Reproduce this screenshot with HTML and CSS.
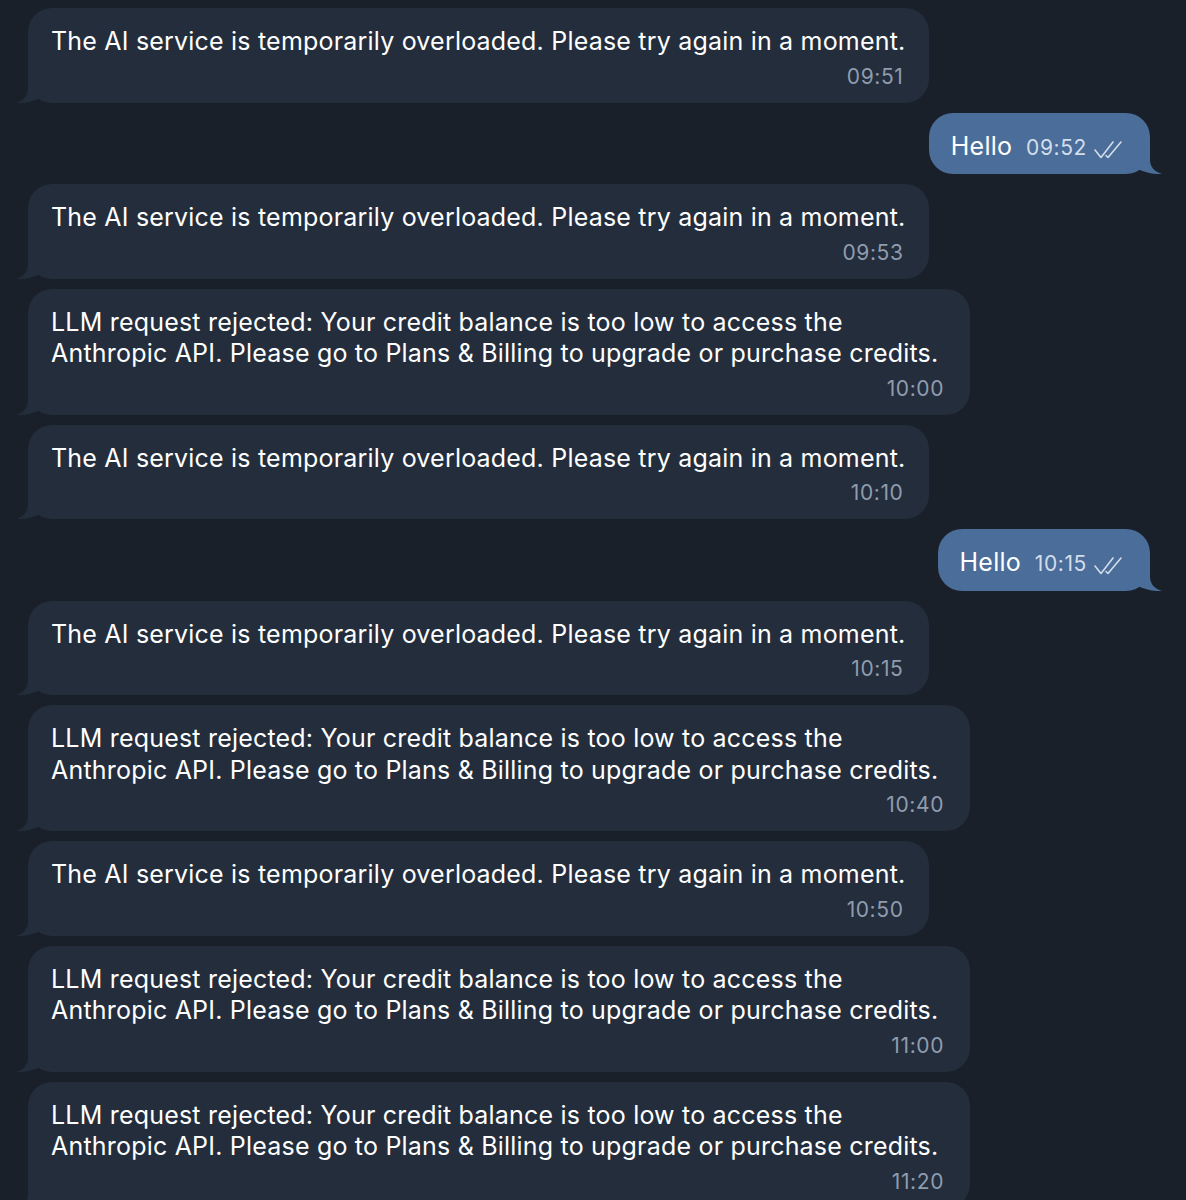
FILE: index.html
```html
<!DOCTYPE html>
<html lang="en">
<head>
<meta charset="utf-8">
<title>Chat</title>
<link rel="stylesheet" href="styles.css">
</head>
<body>
<div class="chat">
  <div class="msg in">
    <div class="bubble">
      <svg class="tail" viewBox="0 0 40 34" width="40" height="34"><path d="M12,0 L12,20 C12,27 7,32 0,34 C9,34.5 17,32.5 25,28.5 L40,28.5 L40,0 Z"/></svg>
      <p class="text">The AI service is temporarily overloaded. Please try again in a moment.</p>
      <div class="time">09:51</div>
    </div>
  </div>
  <div class="msg out">
    <div class="bubble">
      <svg class="tail" viewBox="0 0 40 34" width="40" height="34"><path d="M28,0 L28,20 C28,27 33,32 40,34 C31,34.5 23,32.5 15,28.5 L0,28.5 L0,0 Z"/></svg>
      <span class="text">Hello</span>
      <span class="meta"><span class="time">09:52</span><svg class="checks" viewBox="0 0 30 20" width="30" height="20"><path d="M1,10 L7,17.5 L19,2"/><path d="M12,15.5 L14,17.5 L27,2"/></svg></span>
    </div>
  </div>
  <div class="msg in">
    <div class="bubble">
      <svg class="tail" viewBox="0 0 40 34" width="40" height="34"><path d="M12,0 L12,20 C12,27 7,32 0,34 C9,34.5 17,32.5 25,28.5 L40,28.5 L40,0 Z"/></svg>
      <p class="text">The AI service is temporarily overloaded. Please try again in a moment.</p>
      <div class="time">09:53</div>
    </div>
  </div>
  <div class="msg in">
    <div class="bubble">
      <svg class="tail" viewBox="0 0 40 34" width="40" height="34"><path d="M12,0 L12,20 C12,27 7,32 0,34 C9,34.5 17,32.5 25,28.5 L40,28.5 L40,0 Z"/></svg>
      <p class="text">LLM request rejected: Your credit balance is too low to access the Anthropic API. Please go to Plans &amp; Billing to upgrade or purchase credits.</p>
      <div class="time">10:00</div>
    </div>
  </div>
  <div class="msg in">
    <div class="bubble">
      <svg class="tail" viewBox="0 0 40 34" width="40" height="34"><path d="M12,0 L12,20 C12,27 7,32 0,34 C9,34.5 17,32.5 25,28.5 L40,28.5 L40,0 Z"/></svg>
      <p class="text">The AI service is temporarily overloaded. Please try again in a moment.</p>
      <div class="time">10:10</div>
    </div>
  </div>
  <div class="msg out">
    <div class="bubble">
      <svg class="tail" viewBox="0 0 40 34" width="40" height="34"><path d="M28,0 L28,20 C28,27 33,32 40,34 C31,34.5 23,32.5 15,28.5 L0,28.5 L0,0 Z"/></svg>
      <span class="text">Hello</span>
      <span class="meta"><span class="time">10:15</span><svg class="checks" viewBox="0 0 30 20" width="30" height="20"><path d="M1,10 L7,17.5 L19,2"/><path d="M12,15.5 L14,17.5 L27,2"/></svg></span>
    </div>
  </div>
  <div class="msg in">
    <div class="bubble">
      <svg class="tail" viewBox="0 0 40 34" width="40" height="34"><path d="M12,0 L12,20 C12,27 7,32 0,34 C9,34.5 17,32.5 25,28.5 L40,28.5 L40,0 Z"/></svg>
      <p class="text">The AI service is temporarily overloaded. Please try again in a moment.</p>
      <div class="time">10:15</div>
    </div>
  </div>
  <div class="msg in">
    <div class="bubble">
      <svg class="tail" viewBox="0 0 40 34" width="40" height="34"><path d="M12,0 L12,20 C12,27 7,32 0,34 C9,34.5 17,32.5 25,28.5 L40,28.5 L40,0 Z"/></svg>
      <p class="text">LLM request rejected: Your credit balance is too low to access the Anthropic API. Please go to Plans &amp; Billing to upgrade or purchase credits.</p>
      <div class="time">10:40</div>
    </div>
  </div>
  <div class="msg in">
    <div class="bubble">
      <svg class="tail" viewBox="0 0 40 34" width="40" height="34"><path d="M12,0 L12,20 C12,27 7,32 0,34 C9,34.5 17,32.5 25,28.5 L40,28.5 L40,0 Z"/></svg>
      <p class="text">The AI service is temporarily overloaded. Please try again in a moment.</p>
      <div class="time">10:50</div>
    </div>
  </div>
  <div class="msg in">
    <div class="bubble">
      <svg class="tail" viewBox="0 0 40 34" width="40" height="34"><path d="M12,0 L12,20 C12,27 7,32 0,34 C9,34.5 17,32.5 25,28.5 L40,28.5 L40,0 Z"/></svg>
      <p class="text">LLM request rejected: Your credit balance is too low to access the Anthropic API. Please go to Plans &amp; Billing to upgrade or purchase credits.</p>
      <div class="time">11:00</div>
    </div>
  </div>
  <div class="msg in">
    <div class="bubble">
      <svg class="tail" viewBox="0 0 40 34" width="40" height="34"><path d="M12,0 L12,20 C12,27 7,32 0,34 C9,34.5 17,32.5 25,28.5 L40,28.5 L40,0 Z"/></svg>
      <p class="text">LLM request rejected: Your credit balance is too low to access the Anthropic API. Please go to Plans &amp; Billing to upgrade or purchase credits.</p>
      <div class="time">11:20</div>
    </div>
  </div>
</div>
</body>
</html>
```

FILE: styles.css
```css
html, body {
  margin: 0;
  padding: 0;
  background: #1a2029;
}
body {
  font-family: Inter, "Noto Sans", "Liberation Sans", sans-serif;
  color: #ffffff;
  overflow: hidden;
  height: 1200px;
}
.chat {
  display: flex;
  flex-direction: column;
  gap: 10px;
  padding-top: 8px;
}
.msg {
  display: flex;
}
.msg.in {
  justify-content: flex-start;
  padding-left: 28px;
}
.msg.out {
  justify-content: flex-end;
  padding-right: 36px;
}
.bubble {
  position: relative;
  border-radius: 24px;
}
.in .bubble {
  background: #232d3c;
  padding: 18px 24px 14px 23px;
}
.out .bubble {
  background: #4a6d99;
  padding: 17px 26px 12.5px 22px;
  height: 32px;
  display: flex;
  align-items: baseline;
  gap: 14px;
}
.tail {
  position: absolute;
  bottom: 0;
  display: block;
}
.in .tail {
  left: -12px;
  fill: #232d3c;
}
.out .tail {
  right: -12px;
  fill: #4a6d99;
}
.text {
  position: relative;
  margin: 0;
  font-size: 25px;
  line-height: 31.5px;
  max-width: 895px;
  letter-spacing: 0.2px;
}
.out .text {
  line-height: 32px;
}
.in .time {
  position: relative;
  margin-top: 7px;
  text-align: right;
  font-size: 21px;
  line-height: 24px;
  letter-spacing: 0.6px;
  color: #8f9cae;
  padding-right: 2px;
}
.meta {
  position: relative;
  display: flex;
  align-items: baseline;
  gap: 7px;
}
.out .time {
  font-size: 21px;
  line-height: 20px;
  letter-spacing: 0.6px;
  color: #d3deec;
}
.checks {
  fill: none;
  stroke: #d3deec;
  stroke-width: 1.6;
  stroke-linecap: round;
  stroke-linejoin: round;
  align-self: center;
  margin-top: 2px;
}
```
